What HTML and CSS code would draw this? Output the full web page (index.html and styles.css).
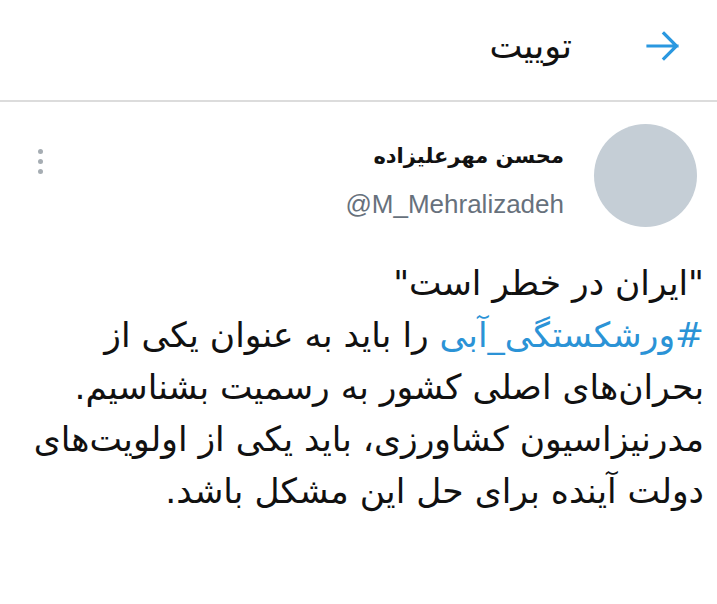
FILE: index.html
```html
<!DOCTYPE html>
<html lang="fa" dir="rtl">
<head>
<meta charset="utf-8">
<link rel="stylesheet" href="styles.css">
</head>
<body>
<header class="topbar">
  <svg class="back" viewBox="0 0 34 30" width="34" height="30" aria-hidden="true">
    <path d="M2 15 H31 M18 2.5 L30.5 15 L18 27.5" fill="none" stroke="#2a98e0" stroke-width="3.2" stroke-linecap="square"/>
  </svg>
  <h1 class="title">توییت</h1>
</header>
<main class="tweet">
  <div class="author">
    <div class="avatar"></div>
    <div class="names">
      <div class="name">محسن مهرعلیزاده</div>
      <div class="handle" dir="ltr">@M_Mehralizadeh</div>
    </div>
    <div class="more"><span></span><span></span><span></span></div>
  </div>
  <p class="text">"ایران در خطر است"<br><a class="tag">#ورشکستگی_آبی</a> را باید به عنوان یکی از<br>بحران‌های اصلی کشور به رسمیت بشناسیم.<br>مدرنیزاسیون کشاورزی، باید یکی از اولویت‌های<br>دولت آینده برای حل این مشکل باشد.</p>
</main>
</body>
</html>
```

FILE: styles.css
```css
html, body {
  margin: 0;
  padding: 0;
  background: #ffffff;
  font-family: "DejaVu Sans", sans-serif;
  color: #14171a;
}
.topbar {
  height: 92px;
  padding-bottom: 8px;
  border-bottom: 2px solid #dcdcdc;
  display: flex;
  align-items: center;
  padding-right: 37px;
  gap: 74px;
}
.back {
  display: block;
}
.title {
  margin: 0;
  font-size: 35px;
  font-weight: normal;
  color: #111;
}
.tweet {
  padding: 22px 13px 0 20px;
}
.author {
  display: flex;
  align-items: flex-start;
  padding-right: 7px;
}
.avatar {
  width: 103px;
  height: 103px;
  border-radius: 50%;
  background: #c5ced6;
  flex: none;
}
.names {
  margin-right: 30px;
  flex: 1;
  padding-top: 17px;
}
.name {
  font-weight: bold;
  font-size: 21px;
  color: #111;
  line-height: 30px;
}
.handle {
  text-align: right;
  font-family: "Liberation Sans", sans-serif;
  font-size: 26px;
  color: #67717c;
  margin-top: 18px;
}
.more {
  display: flex;
  flex-direction: column;
  gap: 5px;
  padding: 25px 0 0 18px;
}
.more span {
  width: 5px;
  height: 5px;
  border-radius: 50%;
  background: #a6adb3;
}
.text {
  margin: 30px 0 0;
  font-size: 34.5px;
  line-height: 52px;
  color: #111;
}
.tag {
  color: #2b93d6;
}
```
